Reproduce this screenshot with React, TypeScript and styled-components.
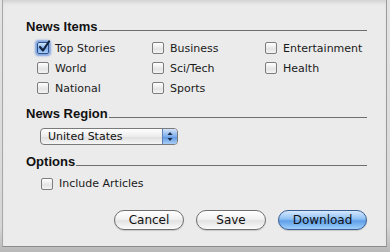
import React from "react";
import styled, { createGlobalStyle } from "styled-components";

const GlobalStyle = createGlobalStyle`
  html, body {
    margin: 0;
    padding: 0;
    width: 390px;
    height: 252px;
    overflow: hidden;
    background: #c9c9c9;
    font-family: "DejaVu Sans", "Liberation Sans", sans-serif;
  }
`;

const Frame = styled.div`
  width: 390px;
  height: 252px;
  box-sizing: border-box;
  padding: 0 3px 5px 2px;
  background: linear-gradient(to bottom, #e4e4e4 0%, #d6d6d6 90%, #b8b8b8 100%);
`;

const Panel = styled.div`
  height: 100%;
  box-sizing: border-box;
  background: #ebebeb;
  border-left: 1px solid #a8a8a8;
  border-right: 1px solid #9a9a9a;
  border-bottom: 1px solid #8a8a8a;
  box-shadow: inset 0 4px 4px -2px rgba(0, 0, 0, 0.12);
  padding: 19px 19px 0 22px;
  display: flex;
  flex-direction: column;
`;

const SectionHead = styled.div<{ $gap?: number }>`
  display: flex;
  align-items: flex-end;
  height: 15px;
  margin-top: ${(p) => p.$gap ?? 0}px;
`;

const Title = styled.span`
  font-family: "Liberation Sans", "DejaVu Sans", sans-serif;
  font-weight: bold;
  font-size: 13px;
  color: #111;
  line-height: 15px;
  margin-left: 1px;
`;

const Rule = styled.span`
  flex: 1;
  height: 0;
  border-bottom: 1px solid #6e6e6e;
  margin: 0 0 3px 1px;
`;

const Grid = styled.div`
  display: grid;
  grid-template-columns: 115px 113px auto;
  grid-auto-rows: 20px;
  margin: 4px 0 0 12px;
`;

const Item = styled.label`
  display: flex;
  align-items: center;
  gap: 6px;
  font-size: 11px;
  color: #1a1a1a;
`;

const Box = styled.span<{ $checked?: boolean }>`
  width: 12px;
  height: 12px;
  box-sizing: border-box;
  border-radius: 2px;
  border: 1px solid ${(p) => (p.$checked ? "#2f4f85" : "#7d7d7d")};
  background: ${(p) =>
    p.$checked
      ? "linear-gradient(to bottom, #cfe3fb, #7fb0ee 55%, #a8cdf7)"
      : "linear-gradient(to bottom, #ffffff, #e4e4e4 60%, #f4f4f4)"};
  box-shadow: ${(p) =>
    p.$checked ? "0 0 2px 2px rgba(90, 140, 220, 0.75)" : "none"};
  position: relative;
  flex-shrink: 0;
`;

const Check = styled.svg`
  position: absolute;
  left: 0;
  top: -3px;
`;

const Select = styled.div`
  margin: 7px 0 0 15px;
  width: 138px;
  height: 17px;
  box-sizing: border-box;
  border: 1px solid #7a7a7a;
  border-radius: 4px;
  background: linear-gradient(to bottom, #ffffff, #ececec 50%, #dedede 52%, #f6f6f6);
  display: flex;
  align-items: center;
  overflow: hidden;
`;

const SelectText = styled.span`
  flex: 1;
  font-size: 11px;
  padding-left: 7px;
  color: #111;
`;

const Stepper = styled.span`
  width: 14px;
  height: 100%;
  border-left: 1px solid #5c7fb6;
  background: linear-gradient(to bottom, #d2e4fb, #7eaeea 50%, #5e96e0 52%, #a9cdf6);
  display: flex;
  align-items: center;
  justify-content: center;
`;

const Options = styled.div`
  margin: 8px 0 0 16px;
`;

const Buttons = styled.div`
  display: flex;
  justify-content: flex-end;
  gap: 12px;
  margin-top: 20px;
`;

const Button = styled.button<{ $primary?: boolean; $w: number }>`
  width: ${(p) => p.$w}px;
  height: 20px;
  border-radius: 10px;
  border: 1px solid ${(p) => (p.$primary ? "#3a5d93" : "#6f6f6f")};
  background: ${(p) =>
    p.$primary
      ? "linear-gradient(to bottom, #d6e8fd, #8ec0f4 45%, #5e9ee8 55%, #9ed0fb)"
      : "linear-gradient(to bottom, #ffffff, #f1f1f1 45%, #e2e2e2 55%, #fbfbfb)"};
  font-family: "DejaVu Sans", "Liberation Sans", sans-serif;
  font-size: 12px;
  color: #111;
  padding: 0;
  box-shadow: 0 1px 1px rgba(0, 0, 0, 0.15);
`;

function CheckBox({ label, checked }: { label: string; checked?: boolean }) {
  return (
    <Item>
      <Box $checked={checked}>
        {checked && (
          <Check width="13" height="13" viewBox="0 0 13 13">
            <path
              d="M2 7 L5 10.5 L11 1.5"
              fill="none"
              stroke="#14243f"
              strokeWidth="2.2"
              strokeLinecap="round"
              strokeLinejoin="round"
            />
          </Check>
        )}
      </Box>
      {label}
    </Item>
  );
}

function Section({ title, gap }: { title: string; gap?: number }) {
  return (
    <SectionHead $gap={gap}>
      <Title>{title}</Title>
      <Rule />
    </SectionHead>
  );
}

export default function App() {
  return (
    <>
      <GlobalStyle />
      <Frame>
        <Panel>
          <Section title="News Items" />
          <Grid>
            <CheckBox label="Top Stories" checked />
            <CheckBox label="Business" />
            <CheckBox label="Entertainment" />
            <CheckBox label="World" />
            <CheckBox label="Sci/Tech" />
            <CheckBox label="Health" />
            <CheckBox label="National" />
            <CheckBox label="Sports" />
          </Grid>
          <Section title="News Region" gap={8} />
          <Select>
            <SelectText>United States</SelectText>
            <Stepper>
              <svg width="6" height="11" viewBox="0 0 6 11">
                <path d="M3 1 L5.5 4 H0.5 Z" fill="#1b2b48" />
                <path d="M3 10 L5.5 7 H0.5 Z" fill="#1b2b48" />
              </svg>
            </Stepper>
          </Select>
          <Section title="Options" gap={9} />
          <Options>
            <CheckBox label="Include Articles" />
          </Options>
          <Buttons>
            <Button $w={70}>Cancel</Button>
            <Button $w={70}>Save</Button>
            <Button $w={89} $primary>
              Download
            </Button>
          </Buttons>
        </Panel>
      </Frame>
    </>
  );
}
